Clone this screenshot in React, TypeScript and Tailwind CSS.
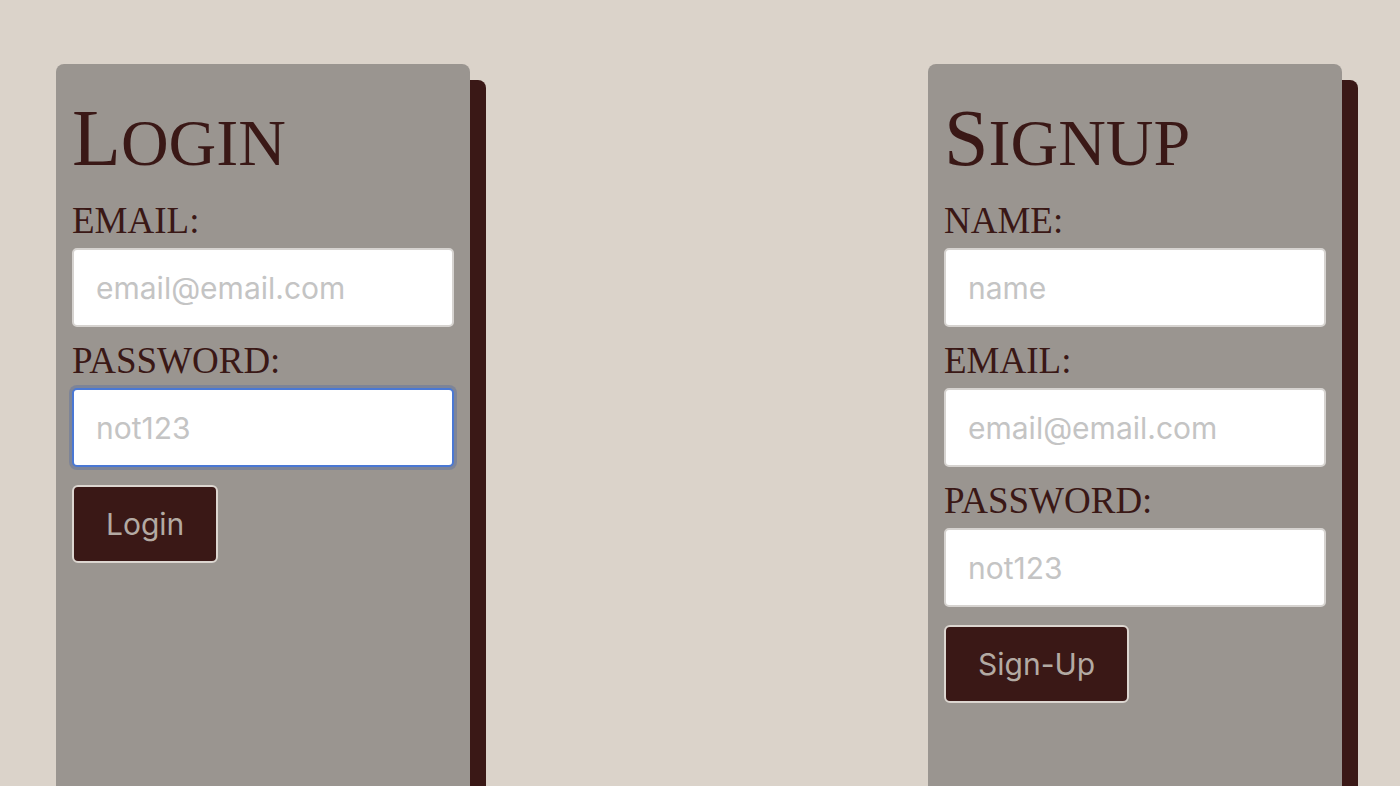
import React from 'react';

const serif = { fontFamily: '"Liberation Serif", "Times New Roman", serif' };

const Field = ({ label, placeholder, focused }: { label: string; placeholder: string; focused?: boolean }) => (
  <div className="flex flex-col">
    <label className="text-[37px] leading-none uppercase text-[#3a1816] mt-[15px] mb-[9px] font-['Liberation_Serif',serif]">
      {label}
    </label>
    <input
      placeholder={placeholder}
      className={
        'h-[79px] w-full rounded-[5px] bg-white px-[22px] text-[30px] text-[#333] placeholder:text-[#c4c4c4] outline-none font-[Inter,sans-serif] ' +
        (focused
          ? 'border-2 border-[#4a78d4] shadow-[0_0_0_3px_rgba(90,110,160,0.45)]'
          : 'border-2 border-[#d6d3d0]')
      }
    />
  </div>
);

const Card = ({ first, rest, fields, button, focusedIndex }: {
  first: string;
  rest: string;
  fields: { label: string; placeholder: string }[];
  button: string;
  focusedIndex?: number;
}) => (
  <div className="w-[414px] h-[800px] shrink-0 rounded-[8px] bg-[#9a9590] px-4 pt-4 shadow-[16px_16px_0_#3a1816]">
    <h1 className="mt-[18px] mb-[9px] leading-none text-[#3a1816]" style={serif}>
      <span className="text-[80px]">{first}</span>
      <span className="text-[66px] uppercase">{rest}</span>
    </h1>
    {fields.map((f, i) => (
      <Field key={f.label} label={f.label} placeholder={f.placeholder} focused={i === focusedIndex} />
    ))}
    <button className="mt-[18px] h-[78px] rounded-[6px] border-2 border-[#dcd6d0] bg-[#3a1816] px-[32px] text-[30px] text-[#b3aaa3] font-[Inter,sans-serif]">
      {button}
    </button>
  </div>
);

export default function App() {
  return (
    <div className="h-screen w-full overflow-hidden bg-[#dbd3ca] pt-[64px] pl-[56px] pr-[58px] flex justify-between items-start">
      <Card
        first="L"
        rest="ogin"
        fields={[
          { label: 'Email:', placeholder: 'email@email.com' },
          { label: 'Password:', placeholder: 'not123' },
        ]}
        button="Login"
        focusedIndex={1}
      />
      <Card
        first="S"
        rest="ignup"
        fields={[
          { label: 'Name:', placeholder: 'name' },
          { label: 'Email:', placeholder: 'email@email.com' },
          { label: 'Password:', placeholder: 'not123' },
        ]}
        button="Sign-Up"
      />
    </div>
  );
}
